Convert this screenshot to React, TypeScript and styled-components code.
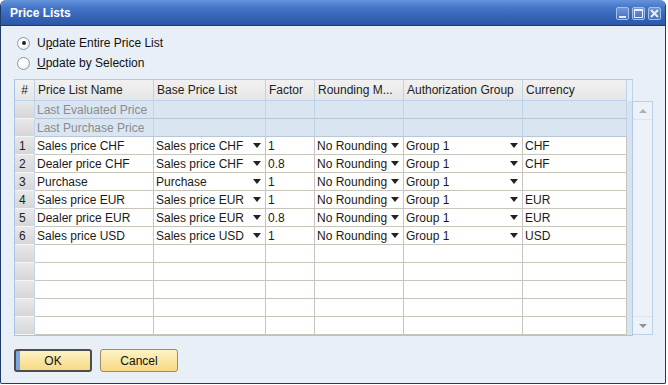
import React from 'react';
import styled, { createGlobalStyle } from 'styled-components';

const GlobalStyle = createGlobalStyle`
  html, body {
    margin: 0;
    padding: 0;
    background: #ffffff;
  }
  body {
    font-family: "Liberation Sans", Arial, sans-serif;
    font-size: 12px;
    color: #1a1a1a;
  }
`;

const COLS = '20px 119px 112px 49px 89px 119px 104px 6px';

type PriceRow = {
  num: string;
  name: string;
  base: string;
  factor: string;
  rounding: string;
  group: string;
  currency: string;
};

const rows: PriceRow[] = [
  { num: '1', name: 'Sales price CHF', base: 'Sales price CHF', factor: '1', rounding: 'No Rounding', group: 'Group 1', currency: 'CHF' },
  { num: '2', name: 'Dealer price CHF', base: 'Sales price CHF', factor: '0.8', rounding: 'No Rounding', group: 'Group 1', currency: 'CHF' },
  { num: '3', name: 'Purchase', base: 'Purchase', factor: '1', rounding: 'No Rounding', group: 'Group 1', currency: '' },
  { num: '4', name: 'Sales price EUR', base: 'Sales price EUR', factor: '1', rounding: 'No Rounding', group: 'Group 1', currency: 'EUR' },
  { num: '5', name: 'Dealer price EUR', base: 'Sales price EUR', factor: '0.8', rounding: 'No Rounding', group: 'Group 1', currency: 'EUR' },
  { num: '6', name: 'Sales price USD', base: 'Sales price USD', factor: '1', rounding: 'No Rounding', group: 'Group 1', currency: 'USD' },
];

const specialRows = ['Last Evaluated Price', 'Last Purchase Price'];
const headers = ['Price List Name', 'Base Price List', 'Factor', 'Rounding M...', 'Authorization Group', 'Currency'];

export default function App() {
  return (
    <>
      <GlobalStyle />
      <Window>
        <TitleBar>
          <Title>Price Lists</Title>
          <TitleButtons>
            <TitleButton>
              <svg width="11" height="11" viewBox="0 0 11 11">
                <rect x="2" y="8" width="7" height="2" fill="#e8eefa" />
              </svg>
            </TitleButton>
            <TitleButton>
              <svg width="11" height="11" viewBox="0 0 11 11">
                <rect x="1.5" y="1.5" width="8" height="8" fill="none" stroke="#e8eefa" strokeWidth="1" />
                <rect x="1" y="1" width="9" height="2" fill="#e8eefa" />
              </svg>
            </TitleButton>
            <TitleButton>
              <svg width="11" height="11" viewBox="0 0 11 11">
                <path d="M2 2 L9 9 M9 2 L2 9" stroke="#e8eefa" strokeWidth="2" />
              </svg>
            </TitleButton>
          </TitleButtons>
        </TitleBar>

        <Body>
          <RadioRow>
            <Radio $checked />
            <span>U<u>p</u>date Entire Price List</span>
          </RadioRow>
          <RadioRow>
            <Radio />
            <span><u>U</u>pdate by Selection</span>
          </RadioRow>

          <GridArea>
            <Grid>
              <HeadCell $center>#</HeadCell>
              {headers.map((h) => (
                <HeadCell key={h}>{h}</HeadCell>
              ))}
              <FillerHead />

              {specialRows.map((name) => (
                <React.Fragment key={name}>
                  <RowHead />
                  <SpecialCell>{name}</SpecialCell>
                  <SpecialCell />
                  <SpecialCell />
                  <SpecialCell />
                  <SpecialCell />
                  <SpecialCell />
                  <Filler />
                </React.Fragment>
              ))}

              {rows.map((r) => (
                <React.Fragment key={r.num}>
                  <RowHead>{r.num}</RowHead>
                  <Cell>{r.name}</Cell>
                  <Cell>
                    <CellText>{r.base}</CellText>
                    <Arrow />
                  </Cell>
                  <Cell>{r.factor}</Cell>
                  <Cell>
                    <CellText>{r.rounding}</CellText>
                    <Arrow />
                  </Cell>
                  <Cell>
                    <CellText>{r.group}</CellText>
                    <Arrow />
                  </Cell>
                  <Cell>{r.currency}</Cell>
                  <Filler />
                </React.Fragment>
              ))}

              {[0, 1, 2, 3, 4].map((i) => (
                <React.Fragment key={i}>
                  <RowHead />
                  <Cell />
                  <Cell />
                  <Cell />
                  <Cell />
                  <Cell />
                  <Cell />
                  <Filler />
                </React.Fragment>
              ))}
            </Grid>

            <ScrollBar>
              <ScrollButton>
                <ScrollArrow $up />
              </ScrollButton>
              <ScrollTrack />
              <ScrollButton $bottom>
                <ScrollArrow />
              </ScrollButton>
            </ScrollBar>
          </GridArea>

          <ButtonRow>
            <DialogButton $default>OK</DialogButton>
            <DialogButton>Cancel</DialogButton>
          </ButtonRow>
        </Body>
      </Window>
    </>
  );
}

const Window = styled.div`
  width: 666px;
  height: 384px;
  box-sizing: border-box;
  display: flex;
  flex-direction: column;
  background: #e9eff7;
  border: 1px solid #1f3b6b;
  border-top: none;
  border-radius: 6px 6px 2px 2px;
  overflow: hidden;
`;

const TitleBar = styled.div`
  height: 25px;
  flex-shrink: 0;
  display: flex;
  align-items: center;
  justify-content: space-between;
  padding: 0 4px 0 9px;
  background: linear-gradient(#6593dc 0%, #4576c7 30%, #3463b5 70%, #2c58a6 100%);
  border-bottom: 1px solid #1d3b73;
`;

const Title = styled.div`
  color: #ffffff;
  font-weight: bold;
  font-size: 12px;
  padding-top: 1px;
`;

const TitleButtons = styled.div`
  display: flex;
  gap: 3px;
  margin-top: 1px;
`;

const TitleButton = styled.div`
  width: 13px;
  height: 13px;
  box-sizing: border-box;
  border: 1px solid #a8c0e6;
  border-radius: 2px;
  background: linear-gradient(#6f97d8, #416fbf);
  display: flex;
  align-items: center;
  justify-content: center;
`;

const Body = styled.div`
  flex: 1;
  display: flex;
  flex-direction: column;
  padding: 7px 12px 0 13px;
`;

const RadioRow = styled.div`
  height: 20px;
  display: flex;
  align-items: center;
  gap: 7px;
  padding-left: 3px;
  color: #111;
  & u {
    text-decoration: underline;
    text-underline-offset: 1px;
  }
`;

const Radio = styled.span<{ $checked?: boolean }>`
  width: 13px;
  height: 13px;
  box-sizing: border-box;
  border-radius: 50%;
  border: 1px solid #8e9aa8;
  background: radial-gradient(circle at 40% 40%, #ffffff 30%, #dfe3e8 100%);
  display: flex;
  align-items: center;
  justify-content: center;
  &::after {
    content: '';
    width: 4px;
    height: 4px;
    border-radius: 50%;
    background: #222;
    display: ${(p) => (p.$checked ? 'block' : 'none')};
  }
`;

const GridArea = styled.div`
  display: flex;
  align-items: flex-start;
  margin-top: 6px;
`;

const Grid = styled.div`
  display: grid;
  grid-template-columns: ${COLS};
  grid-template-rows: 21px repeat(13, 18px);
  border-left: 1px solid #a9c3e3;
  border-top: 1px solid #b6cbe6;
  border-bottom: 1px solid #a9c3e3;
  background: #e9eff7;
`;

const BaseCell = styled.div`
  box-sizing: border-box;
  border-right: 1px solid #c8c5bd;
  border-bottom: 1px solid #c8c5bd;
  display: flex;
  align-items: center;
  padding: 0 2px 0 2px;
  white-space: nowrap;
  overflow: hidden;
`;

const HeadCell = styled(BaseCell)<{ $center?: boolean }>`
  background: linear-gradient(#f1f1f1, #e6e6e6);
  border-right-color: #bed2ea;
  border-bottom-color: #bed2ea;
  padding-left: ${(p) => (p.$center ? '0' : '3px')};
  padding-right: 0;
  justify-content: ${(p) => (p.$center ? 'center' : 'flex-start')};
  color: #222;
`;

const FillerHead = styled.div`
  border-right: 1px solid #bed2ea;
`;

const RowHead = styled(BaseCell)`
  background: linear-gradient(#e8e8e8, #d6d6d6);
  border-right: 1px solid #c5d6ec;
  border-bottom: 1px solid #f2f5f9;
  padding-left: 4px;
  color: #222;
`;

const SpecialCell = styled(BaseCell)`
  background: #dae5f2;
  border-right-color: #c3d2e4;
  border-bottom-color: #b9c6d6;
  color: #8c8c8c;
`;

const Cell = styled(BaseCell)`
  background: #ffffff;
  justify-content: space-between;
  gap: 3px;
`;

const CellText = styled.span`
  overflow: hidden;
  min-width: 0;
`;

const Filler = styled.div`
  background: #d6e3f2;
  border-right: 1px solid #b3cae6;
`;

const Arrow = styled.span`
  width: 0;
  height: 0;
  flex-shrink: 0;
  border-left: 4px solid transparent;
  border-right: 4px solid transparent;
  border-top: 5px solid #222;
  margin-right: 2px;
`;

const ScrollBar = styled.div`
  margin-top: 22px;
  width: 21px;
  height: 234px;
  box-sizing: border-box;
  border: 1px solid #bcd0e8;
  border-left: none;
  background: #edf2f8;
  display: flex;
  flex-direction: column;
`;

const ScrollButton = styled.div<{ $bottom?: boolean }>`
  height: 17px;
  display: flex;
  align-items: center;
  justify-content: center;
  border-top: ${(p) => (p.$bottom ? '1px solid #dbe5f1' : 'none')};
  border-bottom: ${(p) => (p.$bottom ? 'none' : '1px solid #dbe5f1')};
`;

const ScrollTrack = styled.div`
  flex: 1;
`;

const ScrollArrow = styled.span<{ $up?: boolean }>`
  width: 0;
  height: 0;
  border-left: 4px solid transparent;
  border-right: 4px solid transparent;
  border-top: ${(p) => (p.$up ? 'none' : '4px solid #8d939b')};
  border-bottom: ${(p) => (p.$up ? '4px solid #a9b0b8' : 'none')};
`;

const ButtonRow = styled.div`
  display: flex;
  gap: 8px;
  margin-top: 13px;
`;

const DialogButton = styled.button<{ $default?: boolean }>`
  width: 78px;
  height: 23px;
  box-sizing: border-box;
  font-family: "Liberation Sans", Arial, sans-serif;
  font-size: 12px;
  color: #111;
  border-radius: 3px;
  border: ${(p) => (p.$default ? '2px solid #4d4d4d' : '1px solid #9b8c62')};
  background: ${(p) =>
    p.$default
      ? 'linear-gradient(90deg, #7aa8e2 0, #7aa8e2 4px, transparent 4px), linear-gradient(#fdf3c4, #f6d984)'
      : 'linear-gradient(#fdf3c4, #f6d984)'};
  padding: 0;
  display: flex;
  align-items: center;
  justify-content: center;
`;
